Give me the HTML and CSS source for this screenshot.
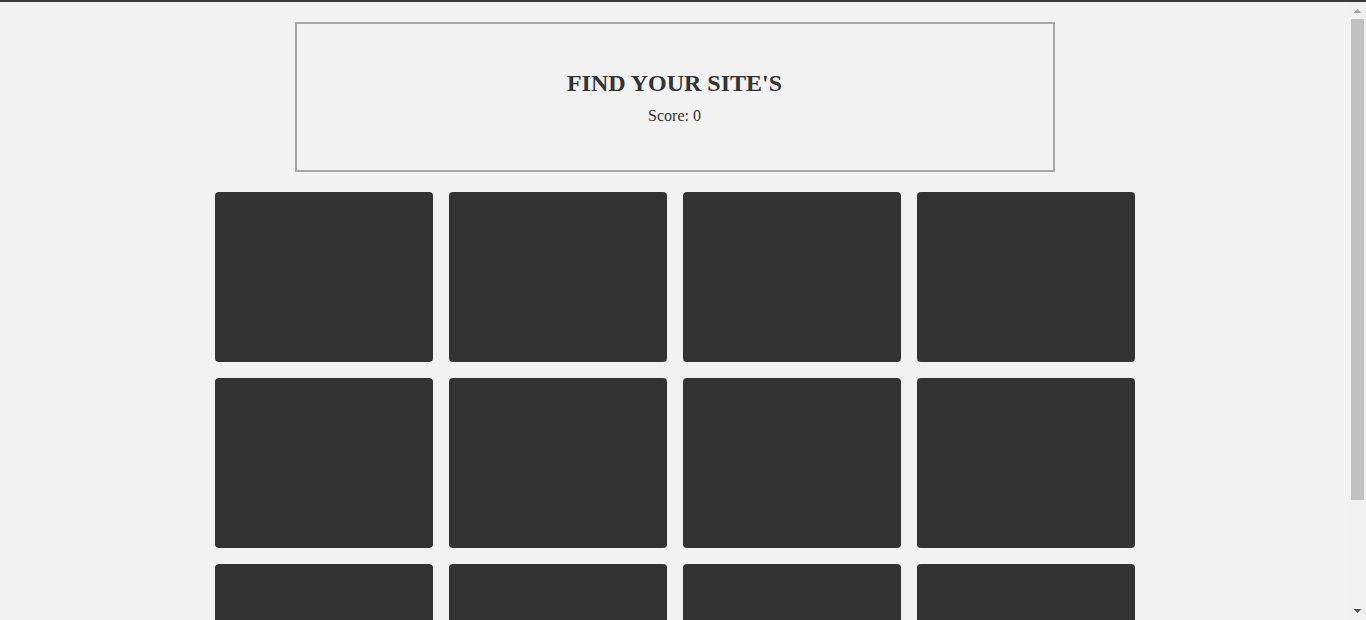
FILE: index.html
```html
<!DOCTYPE html>
<html lang="en">
<head>
<meta charset="utf-8">
<title>Find your site's</title>
<link rel="stylesheet" href="styles.css">
</head>
<body>
  <header class="panel">
    <h1 class="title">FIND YOUR SITE'S</h1>
    <p class="score">Score: <span class="score-value">0</span></p>
  </header>
  <main class="board">
    <div class="card"></div>
    <div class="card"></div>
    <div class="card"></div>
    <div class="card"></div>
    <div class="card"></div>
    <div class="card"></div>
    <div class="card"></div>
    <div class="card"></div>
    <div class="card"></div>
    <div class="card"></div>
    <div class="card"></div>
    <div class="card"></div>
  </main>
  <div class="scrollbar" aria-hidden="true">
    <div class="sb-button">
      <svg width="17" height="17" viewBox="0 0 17 17"><polygon points="4.5,11 12.5,11 8.5,7" fill="#a3a3a3"/></svg>
    </div>
    <div class="sb-track"><div class="sb-thumb"></div></div>
    <div class="sb-button">
      <svg width="17" height="17" viewBox="0 0 17 17"><polygon points="4.5,6 12.5,6 8.5,10" fill="#505050"/></svg>
    </div>
  </div>
</body>
</html>
```

FILE: styles.css
```css
html {
  background: #f2f2f2;
  border-top: 2px solid #383838;
}
body {
  margin: 0 17px 0 0;
  background: #f2f2f2;
  font-family: "Liberation Serif", "Times New Roman", serif;
  color: #333333;
}
.panel {
  box-sizing: border-box;
  width: 760px;
  height: 150px;
  margin: 20px auto 20px;
  border: 2px solid #a6a6a6;
  display: flex;
  flex-direction: column;
  align-items: center;
  justify-content: center;
}
.title {
  margin: 0;
  font-size: 24px;
  font-weight: bold;
  line-height: 28px;
}
.score {
  margin: 10px 0 0;
  font-size: 16px;
  line-height: 18px;
}
.board {
  width: 920px;
  margin: 0 auto;
  padding-bottom: 18px;
  display: grid;
  grid-template-columns: repeat(4, 218px);
  grid-auto-rows: 170px;
  gap: 16px;
}
.card {
  background: #333333;
  border-radius: 4px;
}
.scrollbar {
  position: fixed;
  top: 2px;
  right: 0;
  bottom: 0;
  width: 17px;
  background: #f1f1f1;
  display: flex;
  flex-direction: column;
}
.sb-button {
  height: 17px;
  flex: none;
}
.sb-button svg {
  display: block;
}
.sb-track {
  flex: 1;
  padding: 0 2px;
}
.sb-thumb {
  height: 481px;
  background: #c1c1c1;
}
```
